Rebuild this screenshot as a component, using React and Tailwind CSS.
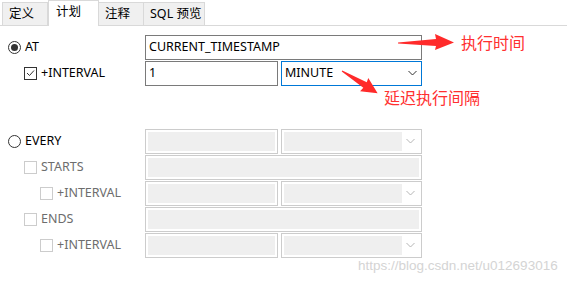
import React from 'react';

const Radio = ({ checked }) => (
  <span className="flex h-[13px] w-[13px] items-center justify-center rounded-full border border-[#333333] bg-white">
    {checked && <span className="h-[7px] w-[7px] rounded-full bg-[#333333]" />}
  </span>
);

const Check = ({ checked, disabled }) => (
  <span
    className={`flex h-[13px] w-[13px] items-center justify-center border bg-white ${
      disabled ? 'border-[#cccccc]' : 'border-[#333333]'
    }`}
  >
    {checked && (
      <svg width="9" height="8" viewBox="0 0 9 8">
        <path d="M1 4 L3.5 6.5 L8 1.5" fill="none" stroke="#333333" strokeWidth="1" />
      </svg>
    )}
  </span>
);

const Chevron = ({ color }) => (
  <svg width="9" height="6" viewBox="0 0 9 6" className="mr-[4px]">
    <path d="M0.5 1 L4.5 5 L8.5 1" fill="none" stroke={color} strokeWidth="1" />
  </svg>
);

const TextBox = ({ value, wide, disabled, focused }) => {
  const w = wide ? 'w-[277px]' : 'w-[133px]';
  if (disabled) {
    return (
      <div className={`${w} h-[25px] border border-[#cccccc] bg-white p-[2px]`}>
        <div className="h-full w-full bg-[#efefef]" />
      </div>
    );
  }
  return (
    <div
      className={`${w} flex h-[25px] items-center border bg-white px-[3px] text-black ${
        focused ? 'border-[#0078d7]' : 'border-[#7a7a7a]'
      }`}
    >
      {value}
    </div>
  );
};

const Select = ({ value, disabled, focused }) => {
  if (disabled) {
    return (
      <div className="ml-[3px] flex h-[25px] w-[141px] items-center border border-[#cccccc] bg-white p-[2px]">
        <div className="h-full w-[118px] bg-[#efefef]" />
        <div className="flex-1" />
        <Chevron color="#b5b5b5" />
      </div>
    );
  }
  return (
    <div
      className={`ml-[3px] flex h-[25px] w-[141px] items-center border bg-white pl-[3px] text-black ${
        focused ? 'border-[#0078d7]' : 'border-[#7a7a7a]'
      }`}
    >
      <span className="flex-1">{value}</span>
      <Chevron color="#333333" />
    </div>
  );
};

const Row = ({ indent, control, label, disabled, children }) => (
  <div className="flex h-[26px] items-center">
    <div className="flex w-[145px] items-center" style={{ paddingLeft: indent }}>
      {control}
      <span className={`ml-[4px] ${disabled ? 'text-[#6d6d6d]' : 'text-black'}`}>{label}</span>
    </div>
    {children}
  </div>
);

const tabs = [
  { name: '定义', w: 'w-[46px]' },
  { name: '计划', w: 'w-[51px]', active: true },
  { name: '注释', w: 'w-[46px]' },
  { name: 'SQL 预览', w: 'w-[62px]' },
];

export default function App() {
  return (
    <div className="relative h-[286px] w-[567px] overflow-hidden bg-white text-[12.5px] text-black font-['Noto_Sans','Noto_Sans_CJK_SC',sans-serif]">
      {/* tab bar */}
      <div className="flex h-[26px] items-end border-b border-[#d9d9d9] pl-[2px]">
        {tabs.map((t) =>
          t.active ? (
            <div
              key={t.name}
              className={`${t.w} -mb-px flex h-[26px] items-start border border-b-0 border-[#d9d9d9] bg-white pl-[7px] pt-[2px]`}
            >
              {t.name}
            </div>
          ) : (
            <div
              key={t.name}
              className={`${t.w} -ml-px flex h-[23px] items-center border border-b-0 border-[#d9d9d9] bg-[#f0f0f0] pl-[6px] first:ml-0`}
            >
              {t.name}
            </div>
          )
        )}
      </div>

      {/* schedule form */}
      <div className="pt-[8px]">
        <Row indent={8} control={<Radio checked />} label="AT">
          <TextBox value="CURRENT_TIMESTAMP" wide />
        </Row>
        <Row indent={24} control={<Check checked />} label="+INTERVAL">
          <TextBox value="1" />
          <Select value="MINUTE" focused />
        </Row>

        <div className="mt-[42px]">
          <Row indent={8} control={<Radio />} label="EVERY">
            <TextBox disabled />
            <Select disabled />
          </Row>
          <Row indent={24} control={<Check disabled />} label="STARTS" disabled>
            <TextBox disabled wide />
          </Row>
          <Row indent={40} control={<Check disabled />} label="+INTERVAL" disabled>
            <TextBox disabled />
            <Select disabled />
          </Row>
          <Row indent={24} control={<Check disabled />} label="ENDS" disabled>
            <TextBox disabled wide />
          </Row>
          <Row indent={40} control={<Check disabled />} label="+INTERVAL" disabled>
            <TextBox disabled />
            <Select disabled />
          </Row>
        </div>
      </div>

      {/* annotations */}
      <svg className="absolute left-0 top-0" width="567" height="286" viewBox="0 0 567 286">
        <polygon points="398,42.5 436,39 435,34 454,42.5 435,50 436,46 398,43.5" fill="#ff2a2a" />
        <g transform="translate(342 71) rotate(32)">
          <polygon points="0,-0.5 27,-3.5 26,-8 42,0 26,7.5 27,3 0,0.5" fill="#ff2a2a" />
        </g>
      </svg>
      <div className="absolute left-[461px] top-[33px] text-[16px] leading-[20px] text-[#ff3030]">执行时间</div>
      <div className="absolute left-[384px] top-[88px] text-[16px] leading-[20px] text-[#ff3030]">延迟执行间隔</div>

      <div className="absolute left-[358px] top-[257px] text-[13.5px] leading-[18px] text-[#d4d4d4] font-['Liberation_Sans',sans-serif]">
        https://blog.csdn.net/u012693016
      </div>
    </div>
  );
}
